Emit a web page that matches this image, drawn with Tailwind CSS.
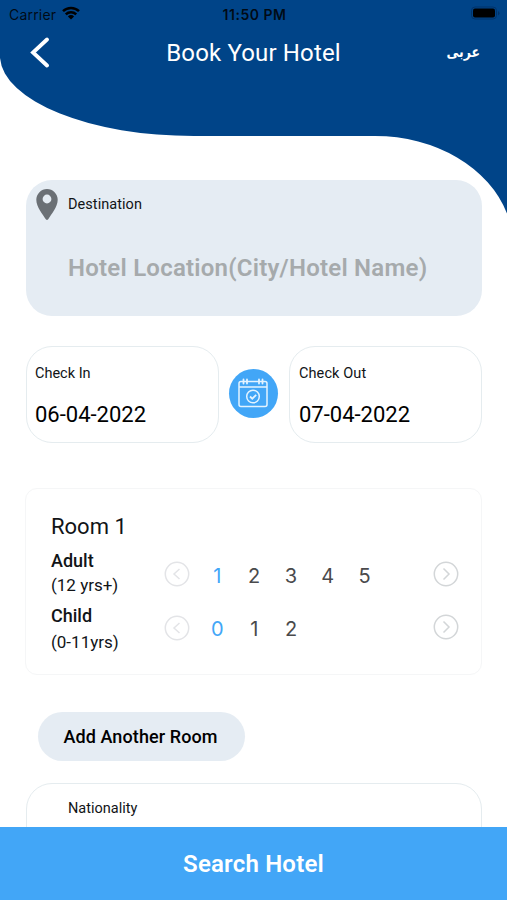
<!DOCTYPE html>
<html lang="en">
  <head>
    <meta charset="UTF-8">
    <meta name="viewport" content="width=device-width, initial-scale=1.0">
    <title>Book Your Hotel</title>
    <script src="https://cdn.jsdelivr.net/npm/@tailwindcss/browser@4"></script>
  </head>

  <body class="bg-white">
    <div class="relative flex flex-col w-[507px] h-[900px] overflow-hidden font-['Roboto',sans-serif] text-[#111417]">
      <!-- Wave behind the header -->
      <svg class="absolute top-0 left-0" width="507" height="220" viewBox="0 0 507 220">
        <path fill="#004488" d="M0 0H507V213.500A138 110 0 0 0 375 136L194 136A194 81 0 0 1 0 58Z" />
      </svg>

      <header class="relative h-[179px] shrink-0">
        <!-- Status bar -->
        <div class="grid grid-cols-3 items-center h-7 pl-[9px] pr-[7px] font-['Inter',sans-serif] text-black/85">
          <div class="flex items-center gap-[6px] text-[14px]">
            <span class="tracking-[0.2px]">Carrier</span>
            <svg class="-mt-[3px]" width="18" height="14" viewBox="0 0 18 14" fill="none" stroke="#000" stroke-width="2.500">
              <path d="M1 5.200A11.500 11.500 0 0 1 17 5.200" />
              <path d="M3.800 8.300A7.400 7.400 0 0 1 14.200 8.300" />
              <path d="M9 13.500L5.900 10.400A4.400 4.400 0 0 1 12.100 10.400Z" fill="#000" stroke="none" />
            </svg>
          </div>
          <span class="text-center text-[14px] tracking-[0.5px] font-semibold whitespace-nowrap">11:50 PM</span>
          <svg class="justify-self-end -mt-[2px]" width="30" height="14" viewBox="0 0 30 14">
            <rect x="1.500" y="1" width="25" height="12" rx="3.500" fill="none" stroke="#00336a" />
            <rect x="3" y="2.500" width="22" height="9" rx="2" fill="#000" />
            <path d="M28 5V9.500Q29.500 8.500 29.500 7.200T28 5Z" fill="#00336a" />
          </svg>
        </div>
        <!-- Title row -->
        <div class="grid grid-cols-3 items-center h-[49px] pl-[29px] pr-[27px] text-white">
          <svg width="22" height="32" viewBox="0 0 22 32" fill="none" stroke="#fff" stroke-width="3.800" stroke-linecap="round" stroke-linejoin="miter">
            <path d="M18 2.500L4 15.500L18 28.500" />
          </svg>
          <h1 class="justify-self-center pr-[2px] text-[24px] tracking-[0.15px] whitespace-nowrap">Book Your Hotel</h1>
          <span class="justify-self-end origin-right scale-x-[.86] text-[14.500px] font-bold font-['DejaVu_Sans',sans-serif]" lang="ar" dir="rtl">عربى</span>
        </div>
      </header>

      <main class="relative flex flex-col pl-[26px] pr-[25px] pt-px">
        <!-- Destination -->
        <section class="flex h-[136px] rounded-[26px] bg-[#e5ecf3] pl-[10px] pt-[9px]">
          <svg class="shrink-0" width="22" height="32" viewBox="0 0 22 32">
            <path fill="#6b7075" fill-rule="evenodd" d="M11 0A10.700 10.700 0 0 0 .3 10.700C.3 18 7 25.500 9.800 30.300Q11 31.700 12.200 30.300C15 25.500 21.700 18 21.700 10.700A10.700 10.700 0 0 0 11 0ZM11 5.600A4.400 4.400 0 1 1 11 14.400A4.400 4.400 0 1 1 11 5.600Z" />
          </svg>
          <div class="flex flex-col pl-[10px] pt-[6px]">
            <label class="text-[14.500px] leading-5 tracking-[0.05px]">Destination</label>
            <span class="mt-[35px] text-[24px] leading-9 tracking-[0.23px] font-semibold text-[#a6aaac] whitespace-nowrap">Hotel Location(City/Hotel Name)</span>
          </div>
        </section>

        <!-- Dates -->
        <section class="mt-[30px] flex items-center justify-between">
          <div class="flex flex-col w-[193px] h-[97px] rounded-[26px] border border-[#e5ecef] pl-[8px] pt-[17px]">
            <label class="text-[14.500px] leading-5">Check In</label>
            <span class="mt-[15px] text-[22px] leading-8 text-black">06-04-2022</span>
          </div>
          <div class="flex items-center justify-center size-[49px] -mt-[3px] -ml-[2px] rounded-full bg-[#42a6f7]">
            <svg width="30" height="30" viewBox="0 0 30 30" fill="none" stroke="#e3f3ff" stroke-width="1.500">
              <rect x="1" y="3.500" width="28" height="25" rx="2" />
              <path d="M1 9H29" />
              <path d="M5.500 1.500V5.500M9 1.500V5.500M21 1.500V5.500M24.500 1.500V5.500" stroke-width="1.800" stroke-linecap="round" />
              <circle cx="15" cy="18.500" r="6.300" />
              <path d="M12 18.500L14.300 20.700L18.200 16.800" stroke-width="1.800" />
            </svg>
          </div>
          <div class="flex flex-col w-[193px] h-[97px] rounded-[26px] border border-[#e5ecef] pl-[9px] pt-[17px]">
            <label class="text-[14.500px] leading-5 tracking-[0.1px]">Check Out</label>
            <span class="mt-[15px] text-[22px] leading-8 text-black">07-04-2022</span>
          </div>
        </section>

        <!-- Room -->
        <section class="mt-[45px] h-[187px] -ml-px rounded-xl border border-[#f5f6f7] pl-[25px] pr-[22px] pt-[22px]">
          <h2 class="text-[22px] leading-8">Room 1</h2>
          <div class="flex items-center h-[57px]">
            <div class="w-[113px] pt-[2px] text-[17px] leading-6">
              <p class="text-[18px] font-medium">Adult</p>
              <p>(12 yrs+)</p>
            </div>
            <svg class="shrink-0 mt-[5px]" width="26" height="26" viewBox="0 0 26 26" fill="none" stroke="#e3e4e7" stroke-width="1.500">
              <circle cx="13" cy="13" r="11.700" />
              <path d="M15.500 8L10 13L15.500 18" />
            </svg>
            <div class="grid grid-cols-5 w-[184px] ml-[9px] mt-[8px] font-['Inter',sans-serif] text-[20px] text-center text-[#4a4a4c]">
              <span class="text-[#42a6f7]">1</span>
              <span>2</span>
              <span>3</span>
              <span>4</span>
              <span>5</span>
            </div>
            <svg class="shrink-0 ml-auto mt-[4px]" width="26" height="26" viewBox="0 0 26 26" fill="none" stroke="#d3d6d8" stroke-width="1.500">
              <circle cx="13" cy="13" r="11.700" />
              <path d="M10.500 7.500L16 13L10.500 18.500" />
            </svg>
          </div>
          <div class="flex items-center h-[52px]">
            <div class="w-[113px] pt-[6px] text-[17px] leading-[27px]">
              <p class="text-[18px] font-medium">Child</p>
              <p>(0-11yrs)</p>
            </div>
            <svg class="shrink-0 mt-[4px]" width="26" height="26" viewBox="0 0 26 26" fill="none" stroke="#e3e4e7" stroke-width="1.500">
              <circle cx="13" cy="13" r="11.700" />
              <path d="M15.500 8L10 13L15.500 18" />
            </svg>
            <div class="grid grid-cols-5 w-[184px] ml-[9px] mt-[5px] font-['Inter',sans-serif] text-[20px] text-center text-[#4a4a4c]">
              <span class="text-[#42a6f7]">0</span>
              <span>1</span>
              <span>2</span>
            </div>
            <svg class="shrink-0 ml-auto mt-px" width="26" height="26" viewBox="0 0 26 26" fill="none" stroke="#d3d6d8" stroke-width="1.500">
              <circle cx="13" cy="13" r="11.700" />
              <path d="M10.500 7.500L16 13L10.500 18.500" />
            </svg>
          </div>
        </section>

        <button class="mt-[37px] ml-[12px] w-[207px] h-[49px] pr-[2px] rounded-full bg-[#e5ecf3] text-[18px] tracking-[0.1px] font-medium text-black">Add Another Room</button>

        <!-- Nationality -->
        <section class="mt-[22px] h-[100px] rounded-[26px] border border-[#e5ecef] pl-[41px] pt-[15px]">
          <label class="block text-[14.500px] leading-5">Nationality</label>
        </section>
      </main>

      <!-- Search bar fixed over the form -->
      <button class="absolute bottom-0 left-0 w-full h-[73px] bg-[#42a6f7] text-[24px] tracking-[0.2px] font-semibold text-white">Search Hotel</button>
    </div>
  </body>
</html>
